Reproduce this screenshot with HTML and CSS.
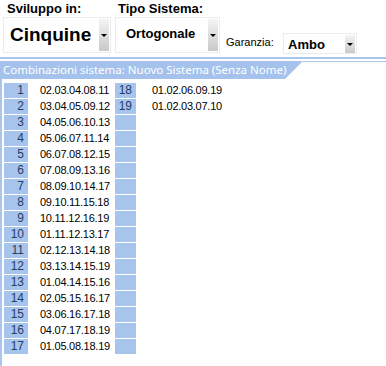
FILE: index.html
```html
<!DOCTYPE html>
<html>
<head>
<meta charset="utf-8">
<link rel="stylesheet" href="styles.css">
</head>
<body>
<div class="page">
  <div class="top">
    <div class="group g1">
      <div class="label">Sviluppo in:</div>
      <div class="select big">
        <span class="value">Cinquine</span>
        <span class="btn"><span class="tri"></span></span>
      </div>
    </div>
    <div class="group g2">
      <div class="label">Tipo Sistema:</div>
      <div class="select mid">
        <span class="value">Ortogonale</span>
        <span class="btn"><span class="tri"></span></span>
      </div>
    </div>
    <div class="group g3">
      <span class="small-label">Garanzia:</span>
      <div class="select small">
        <span class="value">Ambo</span>
        <span class="btn"><span class="tri"></span></span>
      </div>
    </div>
  </div>
  <div class="sep"></div>
  <div class="tabrow">
    <div class="tab">Combinazioni sistema: Nuovo Sistema (Senza Nome)</div>
    <div class="tabline"></div>
  </div>
  <div class="content">
    <div class="grid">
      <div class="num">1</div><div class="combo">02.03.04.08.11</div><div class="num">18</div><div class="combo c2">01.02.06.09.19</div>
      <div class="num">2</div><div class="combo">03.04.05.09.12</div><div class="num">19</div><div class="combo c2">01.02.03.07.10</div>
      <div class="num">3</div><div class="combo">04.05.06.10.13</div><div class="num"></div><div class="combo c2"></div>
      <div class="num">4</div><div class="combo">05.06.07.11.14</div><div class="num"></div><div class="combo c2"></div>
      <div class="num">5</div><div class="combo">06.07.08.12.15</div><div class="num"></div><div class="combo c2"></div>
      <div class="num">6</div><div class="combo">07.08.09.13.16</div><div class="num"></div><div class="combo c2"></div>
      <div class="num">7</div><div class="combo">08.09.10.14.17</div><div class="num"></div><div class="combo c2"></div>
      <div class="num">8</div><div class="combo">09.10.11.15.18</div><div class="num"></div><div class="combo c2"></div>
      <div class="num">9</div><div class="combo">10.11.12.16.19</div><div class="num"></div><div class="combo c2"></div>
      <div class="num">10</div><div class="combo">01.11.12.13.17</div><div class="num"></div><div class="combo c2"></div>
      <div class="num">11</div><div class="combo">02.12.13.14.18</div><div class="num"></div><div class="combo c2"></div>
      <div class="num">12</div><div class="combo">03.13.14.15.19</div><div class="num"></div><div class="combo c2"></div>
      <div class="num">13</div><div class="combo">01.04.14.15.16</div><div class="num"></div><div class="combo c2"></div>
      <div class="num">14</div><div class="combo">02.05.15.16.17</div><div class="num"></div><div class="combo c2"></div>
      <div class="num">15</div><div class="combo">03.06.16.17.18</div><div class="num"></div><div class="combo c2"></div>
      <div class="num">16</div><div class="combo">04.07.17.18.19</div><div class="num"></div><div class="combo c2"></div>
      <div class="num">17</div><div class="combo">01.05.08.18.19</div><div class="num"></div><div class="combo c2"></div>
    </div>
  </div>
</div>
</body>
</html>
```
FILE: styles.css
```css
html, body {
  margin: 0;
  padding: 0;
  background: #ffffff;
}
.page {
  width: 386px;
  height: 366px;
  overflow: hidden;
  font-family: "Liberation Sans", Arial, sans-serif;
  color: #000;
  display: flex;
  flex-direction: column;
}
.top {
  height: 57px;
  display: flex;
  align-items: flex-start;
  padding-left: 3px;
}
.group {
  display: flex;
  flex-direction: column;
}
.label {
  font-weight: bold;
  font-size: 13px;
  line-height: 15px;
  height: 16px;
  padding-top: 1px;
  padding-left: 4px;
}
.g2 {
  margin-left: 4px;
}
.g2 .label {
  padding-left: 3px;
}
.g3 {
  flex-direction: row;
  align-items: flex-end;
  margin-left: 6px;
  padding-top: 33px;
}
.small-label {
  font-size: 11px;
  line-height: 13px;
  padding-bottom: 5px;
  width: 57px;
}
.select {
  display: flex;
  border: 1px solid #ececec;
  padding: 1px 1px 1px 0;
  box-sizing: border-box;
}
.value {
  flex: 1;
  font-weight: bold;
  display: flex;
  align-items: center;
}
.big {
  width: 108px;
  height: 36px;
}
.big .value {
  font-size: 19px;
  padding-left: 6px;
}
.mid {
  width: 105px;
  height: 36px;
}
.mid .value {
  font-size: 13px;
  padding-left: 10px;
  padding-bottom: 3px;
}
.small {
  width: 74px;
  height: 21px;
  padding-bottom: 0;
}
.small .value {
  font-size: 13px;
  padding-left: 4px;
}
.btn {
  width: 10px;
  background: linear-gradient(#f4f4f4, #c9c9c9);
  display: flex;
  align-items: center;
  justify-content: center;
}
.small .btn {
  width: 10px;
}
.tri {
  width: 0;
  height: 0;
  border-left: 3px solid transparent;
  border-right: 3px solid transparent;
  border-top: 3px solid #000;
}
.sep {
  height: 2px;
  background: #aac6ee;
}
.tabrow {
  margin-top: 2px;
  height: 18px;
  display: flex;
  position: relative;
}
.tab {
  width: 303px;
  height: 18px;
  background: #a4c2ec;
  color: #ffffff;
  font-family: "Noto Sans", "DejaVu Sans", sans-serif;
  font-size: 11.5px;
  line-height: 18px;
  padding-left: 3px;
  box-sizing: border-box;
  clip-path: polygon(0 0, 303px 0, 285px 18px, 0 18px);
  white-space: nowrap;
}
.tabline {
  flex: 1;
  border-top: 1px solid #aac6ee;
}
.content {
  flex: 1;
  border-left: 2px solid #aac6ee;
  padding-top: 4px;
  padding-left: 2px;
}
.grid {
  display: grid;
  grid-template-columns: 24px 87px 21px 1fr;
  grid-auto-rows: 15px;
  row-gap: 1px;
}
.num {
  background: #a6c4ec;
  color: #263c6a;
  font-size: 12px;
  line-height: 15px;
  text-align: right;
  padding-right: 4px;
}
.combo {
  font-size: 11px;
  letter-spacing: -0.25px;
  line-height: 15px;
  padding-left: 12px;
}
.c2 {
  padding-left: 16px;
}
```
